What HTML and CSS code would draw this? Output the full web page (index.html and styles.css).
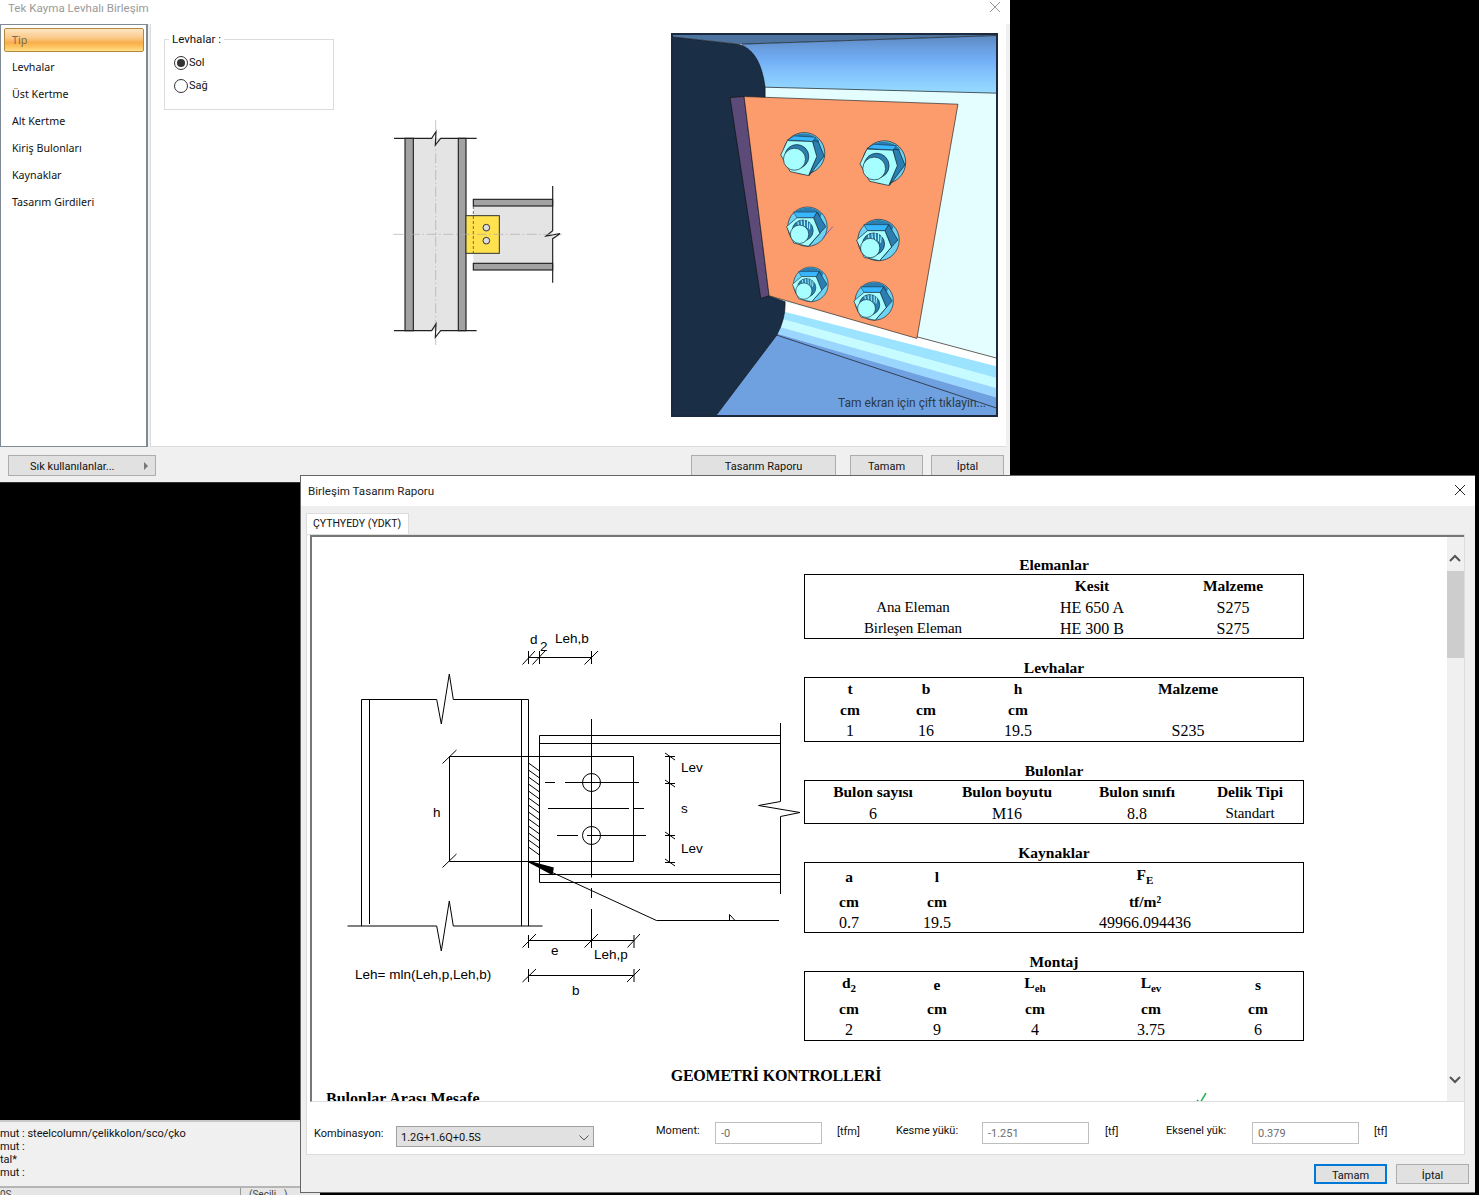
FILE: index.html
```html
<!DOCTYPE html>
<html lang="tr">
<head>
<meta charset="utf-8">
<title>Tek Kayma Levhalı Birleşim</title>
<link rel="stylesheet" href="styles.css">
</head>
<body>
<div class="desktop">

<section class="console">
  <div class="console-lines">
    <div>mut : steelcolumn/çelikkolon/sco/çko</div>
    <div>mut :</div>
    <div>tal*</div>
    <div>mut :</div>
  </div>
  <div class="console-status"><span class="status-a">0S</span><span class="status-b">(Seçili...)</span></div>
</section>

<section class="win win-one">
  <header class="w1-title">Tek Kayma Levhalı Birleşim
    <svg class="close-one" viewBox="0 0 12 12" width="12" height="12"><path d="M1 1L11 11M11 1L1 11"/></svg>
  </header>
  <div class="w1-body">
    <nav class="side">
      <div class="side-item side-active">Tip</div>
      <div class="side-item">Levhalar</div>
      <div class="side-item">Üst Kertme</div>
      <div class="side-item">Alt Kertme</div>
      <div class="side-item">Kiriş Bulonları</div>
      <div class="side-item">Kaynaklar</div>
      <div class="side-item">Tasarım Girdileri</div>
    </nav>
    <main class="w1-main">
      <fieldset class="group">
        <legend>Levhalar :</legend>
        <div class="radio-row"><span class="radio radio-on"></span>Sol</div>
        <div class="radio-row"><span class="radio"></span>Sağ</div>
      </fieldset>

      <svg class="mini" viewBox="0 0 570 675" width="190" height="225">
        <rect class="m-web" x="100" y="55" width="135" height="577"/>
        <rect class="m-fl" x="75" y="55" width="25" height="577"/>
        <rect class="m-fl" x="235" y="55" width="23" height="577"/>
        <path class="m-cl" d="M167 0V675"/>
        <path class="m-ln" d="M42 55H155L168 35L166 75L182 55H290M42 632H155L168 612L166 652L182 632H290"/>
        <rect class="m-web" x="280" y="258" width="238" height="172"/>
        <rect class="m-fl m-st" x="280" y="238" width="238" height="20"/>
        <rect class="m-fl m-st" x="280" y="430" width="238" height="20"/>
        <path class="m-ln" d="M518 198V332L498 348L540 341L518 356V488"/>
        <rect class="m-pl" x="258" y="287" width="100" height="113"/>
        <path class="m-cl" d="M40 343H545"/>
        <path class="m-da" d="M280 258V400"/>
        <circle class="m-ho" cx="319" cy="323" r="10"/>
        <circle class="m-ho" cx="319" cy="362" r="10"/>
      </svg>

      <div class="scene">
        <svg viewBox="24 31 968 1138" width="323" height="380">
          <defs>
            <linearGradient id="flange" gradientUnits="userSpaceOnUse" x1="0" y1="35" x2="0" y2="205">
              <stop class="g-a" offset="0"/>
              <stop class="g-b" offset="0.22"/>
              <stop class="g-c" offset="0.42"/>
              <stop class="g-d" offset="0.66"/>
              <stop class="g-e" offset="1"/>
            </linearGradient>
            <symbol id="bolt-a" viewBox="-80 -80 160 160" overflow="visible">
              <circle class="b-w" r="62"/>
              <path class="b-c" d="M-45 -42A62 62 0 0 1 45 -38L40 -25L-40 -30Z"/>
              <polygon class="b-s" points="25,-38 42,-36 60,8 15,67 36,10"/>
              <polygon class="b-t" points="-50,-40 -30,-52 35,-48 25,-35"/>
              <polygon class="b-f" points="-70,5 -50,-38 25,-35 38,10 13,67 -42,55"/>
              <circle class="b-s" cx="-22" cy="10" r="36"/>
              <circle class="b-f" cx="-29" cy="18" r="33"/>
            </symbol>
            <symbol id="bolt-b" viewBox="-80 -80 160 160" overflow="visible">
              <circle class="b-w" r="62"/>
              <path class="b-c" d="M-40 -46A62 62 0 0 1 45 -40L40 -28L-30 -30Z"/>
              <polygon class="b-s" points="30,-46 58,0 39,21 3,62 39,21 19,-28"/>
              <polygon class="b-t" points="-44,-46 30,-46 19,-28 -33,-28"/>
              <polygon class="b-f" points="-66,0 -33,-28 19,-28 39,21 3,62 -43,52"/>
              <circle class="b-s" cx="-15" cy="12" r="33"/>
              <path class="b-rib" d="M-30 -16L-28 2M-20 -20L-18 0M-10 -21L-9 0M0 -18L0 4M8 -12L6 8"/>
              <circle class="b-f" cx="-25" cy="24" r="29"/>
            </symbol>
          </defs>
          <rect class="c-bg" x="18" y="25" width="980" height="1150"/>
          <polygon class="c-1" points="18,25 998,25 998,32 230,58 18,36"/>
          <polygon class="c-flange" points="230,58 998,32 998,205 300,187"/>
          <path class="c-ln" d="M230 58L998 32M300 187L998 205"/>
          <polygon class="c-w" points="355,830 998,998 998,1025 355,862"/>
          <polygon class="c-6" points="358,860 998,1025 998,1060 350,882"/>
          <polygon class="c-7" points="350,882 998,1060 998,1090 342,905"/>
          <polygon class="c-8" points="342,905 998,1090 998,1118 335,925"/>
          <polygon class="c-9" points="335,925 998,1118 998,1175 150,1175"/>
          <path class="c-ln" d="M755 935L998 1000M335 930L998 1150"/>
          <path class="c-navy" d="M18 36L220 58Q285 75 300 187V240L310 812L360 830Q362 880 335 930L150 1175H18Z"/>
          <polygon class="c-pur" points="195,218 237,215 312,812 287,820"/>
          <polygon class="c-pl" points="237,215 878,238 755,940 312,812"/>
          <use href="#bolt-a" x="337" y="305" width="160" height="160"/>
          <use href="#bolt-a" x="574" y="329" width="166" height="166"/>
          <use href="#bolt-b" x="351" y="529" width="152" height="152"/>
          <use href="#bolt-b" x="560" y="565" width="160" height="160"/>
          <use href="#bolt-b" x="370" y="711" width="134" height="134"/>
          <use href="#bolt-b" x="553" y="754" width="148" height="148"/>
          <path class="c-blue" d="M472 640L503 605"/>
        </svg>
        <span class="scene-hint">Tam ekran için çift tıklayın...</span>
      </div>
    </main>
  </div>
  <footer class="w1-foot">
    <button class="btn btn-fav">Sık kullanılanlar...<span class="fav-arrow"></span></button>
    <div class="w1-actions">
      <button class="btn btn-report">Tasarım Raporu</button>
      <button class="btn btn-small">Tamam</button>
      <button class="btn btn-small">İptal</button>
    </div>
  </footer>
</section>

<section class="win win-two">
  <header class="w2-title">Birleşim Tasarım Raporu
    <svg class="close-two" viewBox="0 0 12 12" width="12" height="12"><path d="M1 1L11 11M11 1L1 11"/></svg>
  </header>
  <div class="tabs"><div class="tab">ÇYTHYEDY (YDKT)</div></div>
  <div class="panel">
    <div class="report-wrap">
      <div class="report">
        <div class="report-top">
          <svg class="cad" viewBox="340 620 470 390" width="470" height="390">
            <path d="M361.5 699.5H436.7L441.3 724L449.3 674L453.3 699.5H528.5M369.5 699.5V924M361.5 699.5V926M521.5 699.5V926M528.5 699.5V926M347.5 926H436.7L441.3 951L449.3 901L453.3 926H542.5"/>
            <path d="M539.5 735.5H780.5M539.5 743.5H780.5M539.5 874.5H780.5M539.5 882.5H780.5M539.5 735.5V882.5M780.5 723V801.5L758.5 805.5L800 812.5L780.5 816.5V894"/>
            <path d="M449.5 756.5H633.5V861.5H449.5ZM442.5 763.5L456.5 750M442.5 867.5L456.5 854"/>
            <path d="M528.5 763L539.5 771M528.5 770L539.5 778M528.5 777L539.5 785M528.5 784L539.5 792M528.5 791L539.5 799M528.5 798L539.5 806M528.5 805L539.5 813M528.5 812L539.5 820M528.5 819L539.5 827M528.5 826L539.5 834M528.5 833L539.5 841M528.5 840L539.5 848M528.5 847L539.5 855"/>
            <path d="M591.5 719V877.5M591.5 888V898M591.5 909V948M545 782.5H555M565 782.5H639M548 808.5H629M634 808.5H644M557 835.5H578M587 835.5H646"/>
            <circle cx="591.5" cy="782.5" r="9"/>
            <circle cx="591.5" cy="835.5" r="9"/>
            <path d="M669.5 757V862M665 756.5H675M665 783.5H675M665 835.5H675M665 862.5H675M665 753L675 760M665 780L675 787M665 832L675 839M665 859L675 866"/>
            <path d="M528.5 657.5H591.5M528.5 651V664M539.5 651V664M591.5 651V664M522.5 664.5L535 651M532.5 664.5L545 651M584.5 664.5L598 651"/>
            <path d="M528.5 940.5H634M528.5 935V948M634 935V948M522.5 947.5L536 934M584.5 947.5L598 934M627.5 947.5L640 934"/>
            <path d="M528.5 975.5H634M528.5 969V982M634 969V982M522.5 982L536 969M627 982L640 969"/>
            <path d="M528.5 861.5L656.5 920.5H779M729.5 920.5V914.5L735 920.5"/>
            <polygon class="cad-fill" points="528.5,861.5 553,868 552,874"/>
            <text x="530" y="644">d</text>
            <text x="540" y="651">2</text>
            <text x="555" y="643">Leh,b</text>
            <text x="681" y="772">Lev</text>
            <text x="681" y="813">s</text>
            <text x="681" y="853">Lev</text>
            <text x="433" y="817">h</text>
            <text x="551" y="955">e</text>
            <text x="594" y="959">Leh,p</text>
            <text x="572" y="995">b</text>
            <text x="355" y="979">Leh= mln(Leh,p,Leh,b)</text>
          </svg>
          <div class="tables">
            <h3 class="t-title">Elemanlar</h3>
            <div class="t t-ele">
              <span></span><b>Kesit</b><b>Malzeme</b>
              <span class="nm">Ana Eleman</span><span>HE 650 A</span><span>S275</span>
              <span class="nm">Birleşen Eleman</span><span>HE 300 B</span><span>S275</span>
            </div>
            <h3 class="t-title">Levhalar</h3>
            <div class="t t-lev">
              <b>t</b><b>b</b><b>h</b><b>Malzeme</b>
              <b>cm</b><b>cm</b><b>cm</b><span></span>
              <span>1</span><span>16</span><span>19.5</span><span>S235</span>
            </div>
            <h3 class="t-title">Bulonlar</h3>
            <div class="t t-bul">
              <b>Bulon sayısı</b><b>Bulon boyutu</b><b>Bulon sınıfı</b><b>Delik Tipi</b>
              <span>6</span><span>M16</span><span>8.8</span><span class="nm">Standart</span>
            </div>
            <h3 class="t-title">Kaynaklar</h3>
            <div class="t t-kay">
              <b class="hd">a</b><b class="hd">l</b><b>F<sub>E</sub></b>
              <b>cm</b><b>cm</b><b>tf/m²</b>
              <span>0.7</span><span>19.5</span><span>49966.094436</span>
            </div>
            <h3 class="t-title">Montaj</h3>
            <div class="t t-mon">
              <b>d<sub>2</sub></b><b class="hd">e</b><b>L<sub>eh</sub></b><b>L<sub>ev</sub></b><b class="hd">s</b>
              <b>cm</b><b>cm</b><b>cm</b><b>cm</b><b>cm</b>
              <span>2</span><span>9</span><span>4</span><span>3.75</span><span>6</span>
            </div>
          </div>
        </div>
        <h2 class="geo">GEOMETRİ KONTROLLERİ</h2>
        <div class="check-row">
          <h4>Bulonlar Arası Mesafe</h4>
          <svg class="tick" viewBox="0 0 12 10" width="12" height="10"><path d="M1 7L4 10L10 0"/></svg>
        </div>
      </div>
      <div class="scroll">
        <svg class="chev" viewBox="0 0 12 8" width="12" height="8"><path d="M1 7L6 2L11 7"/></svg>
        <div class="thumb"></div>
        <svg class="chev chev-down" viewBox="0 0 12 8" width="12" height="8"><path d="M1 1L6 6L11 1"/></svg>
      </div>
    </div>
    <div class="controls">
      <label class="c-label c-combo-label">Kombinasyon:</label>
      <div class="combo">1.2G+1.6Q+0.5S
        <svg viewBox="0 0 10 6" width="10" height="6"><path d="M0.5 0.5L5 5L9.5 0.5"/></svg>
      </div>
      <label class="c-label c-moment">Moment:</label>
      <input class="field" value="-0" readonly>
      <span class="unit u-tfm">[tfm]</span>
      <label class="c-label c-kesme">Kesme yükü:</label>
      <input class="field" value="-1.251" readonly>
      <span class="unit u-tf">[tf]</span>
      <label class="c-label c-eks">Eksenel yük:</label>
      <input class="field" value="0.379" readonly>
      <span class="unit u-tf2">[tf]</span>
    </div>
  </div>
  <footer class="w2-foot">
    <button class="btn btn-foot btn-default">Tamam</button>
    <button class="btn btn-foot">İptal</button>
  </footer>
</section>

</div>
</body>
</html>
```
FILE: styles.css
```css
* { box-sizing: border-box; }
html, body { margin: 0; padding: 0; background: #000; }
body { font-family: Roboto, "Noto Sans", sans-serif; font-size: 11px; color: #111; }
.desktop { position: relative; width: 1479px; height: 1195px; overflow: hidden; background: #000; }
.win { position: absolute; display: flex; flex-direction: column; background: #f0f0f0; }

/* console behind the windows */
.console { position: absolute; left: 0; top: 1120px; width: 320px; height: 75px; background: #f0f0f0; border-top: 2px solid #c8c8c8; display: flex; flex-direction: column; }
.console-lines { flex: 1; padding-top: 5px; line-height: 13px; font-size: 11px; }
.console-status { height: 9px; border-top: 2px solid #b5b5b5; background: #e6e6e6; display: flex; line-height: 14px; font-size: 10px; overflow: hidden; color: #444; }
.status-a { width: 241px; border-right: 1px solid #999; }
.status-b { padding-left: 8px; }

/* first window */
.win-one { left: 0; top: 0; width: 1010px; height: 483px; border-bottom: 1px solid #333; }
.w1-title { position: relative; height: 24px; background: #fff; padding: 1px 0 0 8px; font-size: 11.6px; line-height: 15px; color: #9a9a9a; }
.close-one { position: absolute; right: 9px; top: 1px; fill: none; stroke: #999; stroke-width: 1; }
.w1-body { flex: 1; display: flex; padding-right: 4px; min-height: 0; }
.side { width: 148px; height: 423px; background: #fff; border: 1px solid #7f8a94; border-right-width: 2px; padding: 3px 2px 0 3px; font-family: "Noto Sans", sans-serif; }
.side-item { height: 27px; line-height: 24px; padding-left: 8px; font-size: 10.7px; color: #111; }
.side-active { height: 24px; margin-bottom: 3px; color: #7a6a50; border: 1px solid #b3893f; border-radius: 2px; background: linear-gradient(#fde6c2 0%, #fbc98a 40%, #f9ae4b 62%, #fcc35e 80%, #ffe08a 100%); line-height: 23px; padding-left: 7px; }
.w1-main { flex: 1; margin-left: 2px; height: 423px; background: #fff; border-left: 1px solid #dcdcdc; border-bottom: 1px solid #dcdcdc; display: flex; align-items: flex-start; padding-left: 13px; }
.group { width: 170px; height: 78px; margin: 8px 0 0; padding: 5px 0 0 9px; border: 1px solid #dcdcdc; min-width: 0; }
.group legend { padding: 1px 3px 0; margin-left: -5px; font-size: 11.5px; line-height: 13px; }
.radio-row { display: flex; align-items: center; height: 23px; gap: 1px; }
.radio { width: 14px; height: 14px; border-radius: 50%; border: 1px solid #333; background: #fff; display: flex; align-items: center; justify-content: center; }
.radio-on::after { content: ""; width: 8px; height: 8px; border-radius: 50%; background: #333; }

.mini { margin: 96px 0 0 46px; flex: none; }
.m-web { fill: #e4e4e4; }
.m-fl { fill: #a2a2a2; stroke: #222; stroke-width: 3.5; }
.m-st { stroke-width: 3.5; }
.m-ln { fill: none; stroke: #222; stroke-width: 3.5; }
.m-cl { fill: none; stroke: #aaa; stroke-width: 2; stroke-dasharray: 30 8 4 8; }
.m-pl { fill: #ffe24d; stroke: #333; stroke-width: 3; }
.m-da { fill: none; stroke: #333; stroke-width: 2; stroke-dasharray: 9 6; }
.m-ho { fill: #ddd; stroke: #333; stroke-width: 3; }

.scene { position: relative; flex: none; width: 327px; height: 384px; margin: 9px 0 0 101px; border: 2px solid #1c2a40; }
.scene svg { display: block; }
.scene-hint { position: absolute; left: 165px; top: 361px; font-size: 12px; line-height: 15px; color: #2b3a44; white-space: nowrap; }
.c-bg { fill: #e4fdff; }
.c-1 { fill: #4d739f; }
.c-flange { fill: url(#flange); }
.g-a { stop-color: #5d8ac2; }
.g-b { stop-color: #6a9fe2; }
.g-c { stop-color: #72aef5; }
.g-d { stop-color: #84c4fd; }
.g-e { stop-color: #97dbff; }
.c-w { fill: #fff; }
.c-6 { fill: #9be3ff; }
.c-7 { fill: #c6fbff; }
.c-8 { fill: #9bd6ff; }
.c-9 { fill: #6fa0e0; }
.c-ln { fill: none; stroke: #111; stroke-width: 2; }
.c-navy { fill: #1a2e46; stroke: #111; stroke-width: 2; }
.c-pur { fill: #5c4a78; stroke: #111; stroke-width: 2; }
.c-pl { fill: #fc9b6c; stroke: #222; stroke-width: 2; }
.c-blue { fill: none; stroke: #3a46e8; stroke-width: 2; }
.b-w { fill: #6cd4f2; stroke: #102030; stroke-width: 2; }
.b-c { fill: #2a7fb0; }
.b-s { fill: #2a7fb0; stroke: #102030; stroke-width: 2; }
.b-t { fill: #38b6ff; stroke: #102030; stroke-width: 1.5; }
.b-f { fill: #a6feff; stroke: #102030; stroke-width: 2; }
.b-rib { fill: none; stroke: #a6feff; stroke-width: 3; }

.w1-foot { height: 35px; display: flex; justify-content: space-between; padding: 8px 6px 0 8px; }
.w1-actions { display: flex; gap: 8px; }
.btn { height: 21px; padding: 1px 0 0; border: 1px solid #adadad; background: #e1e1e1; font: 11px/19px Roboto, "Noto Sans", sans-serif; color: #111; }
.btn-fav { position: relative; width: 148px; text-align: left; padding-left: 21px; }
.fav-arrow { position: absolute; right: 7px; top: 6px; border-left: 4px solid #777; border-top: 4px solid transparent; border-bottom: 4px solid transparent; }
.btn-report { width: 145px; margin-right: 6px; }
.btn-small { width: 73px; }

/* second window */
.win-two { left: 300px; top: 475px; width: 1175px; height: 718px; border: 1px solid #666; border-width: 1px 0 1px 1px; background: #efefef; }
.w2-title { position: relative; height: 30px; background: #fff; padding-left: 7px; font-size: 11.6px; line-height: 30px; color: #222; }
.close-two { position: absolute; right: 9px; top: 8px; fill: none; stroke: #222; stroke-width: 1; }
.tabs { height: 28px; padding: 7px 0 0 5px; }
.tab { width: 103px; height: 21px; background: #fff; border: 1px solid #dcdcdc; border-bottom: 0; padding-left: 6px; line-height: 19px; font-size: 10.5px; }
.panel { width: 1159px; height: 621px; margin-left: 5px; background: #fff; border: 1px solid #dcdcdc; padding: 0; display: flex; flex-direction: column; }
.report-wrap { height: 567px; margin: 0 0 0 3px; border-top: 2px solid #777; border-left: 2px solid #777; border-bottom: 1px solid #ddd; display: flex; overflow: hidden; }
.report { width: 1135px; flex: none; overflow: hidden; }
.report-top { display: flex; align-items: flex-start; height: 529px; }
.cad { margin: 83px 0 0 28px; flex: none; }
.cad path, .cad circle { fill: none; stroke: #000; stroke-width: 1; }
.cad .cad-fill { fill: #000; stroke: #000; stroke-width: 1.5; }
.cad text { font-family: "Liberation Sans", sans-serif; font-size: 13.5px; fill: #000; }
.tables { width: 500px; margin: 17px 0 0 -6px; font: 16px/21px "Liberation Serif", serif; color: #000; }
.t-title { margin: 18px 0 0; height: 20px; font: bold 15.5px/22px "Liberation Serif", serif; text-align: center; }
.t-title:first-child { margin-top: 0; }
.t { display: grid; border: 1px solid #000; grid-auto-rows: 21px; text-align: center; white-space: nowrap; }
.t b { font-weight: bold; font-size: 15.5px; }
.t sub { font-size: 11px; line-height: 0; }
.t .nm { font-size: 15px; letter-spacing: -0.1px; }
.t-ele { grid-template-columns: 216px 142px 140px; height: 65px; padding-top: 1px; }
.t-ele b, .t-bul b { line-height: 19px; }
.t-lev { grid-template-columns: 90px 62px 122px 218px; height: 65px; }
.t-bul { grid-template-columns: 136px 132px 128px 98px; height: 44px; padding-top: 1px; }
.t-kay { grid-template-columns: 88px 88px 328px; height: 71px; grid-template-rows: 27px 21px 20px; padding-top: 1px; }
.t-mon { grid-template-columns: 88px 88px 108px 124px 90px; height: 70px; grid-template-rows: 26px 21px 21px; }
.t .hd { padding-top: 2px; }
.geo { margin: 0; width: 928px; height: 20px; font: bold 16px/20px "Liberation Serif", serif; letter-spacing: -0.2px; text-align: center; color: #000; }
.check-row { display: flex; align-items: flex-start; margin-top: 3px; padding-left: 14px; }
.check-row h4 { margin: 0; width: 870px; font: bold 16px/20px "Liberation Serif", serif; color: #000; }
.tick { fill: none; stroke: #22b14c; stroke-width: 1.5; margin-top: 4px; }
.scroll { width: 17px; flex: none; background: #f0f0f0; display: flex; flex-direction: column; align-items: center; position: relative; }
.chev { fill: none; stroke: #555; stroke-width: 2; margin: 17px 2px 0 0; flex: none; }
.thumb { width: 17px; height: 87px; background: #cdcdcd; margin-top: 9px; flex: none; }
.chev-down { margin-top: 418px; }
.controls { flex: 1; display: flex; align-items: flex-start; padding-top: 20px; position: relative; }
.c-label { font-size: 11px; line-height: 14px; white-space: nowrap; }
.c-combo-label { margin: 5px 15px 0 7px; width: 67px; }
.combo { width: 198px; height: 21px; margin-top: 4px; background: #e1e1e1; border: 1px solid #a0a0a0; padding: 2px 4px 0; line-height: 19px; display: flex; justify-content: space-between; align-items: center; }
.combo svg { fill: none; stroke: #555; stroke-width: 1; }
.c-moment { width: 59px; margin: 2px 0 0 62px; }
.field { width: 107px; height: 22px; border: 1px solid #bfbfbf; background: #fff; padding: 0 5px; font: 11px Roboto, "Noto Sans", sans-serif; color: #6d6d6d; margin-top: 0; outline: 0; }
.unit { font-size: 11px; line-height: 14px; margin-top: 3px; white-space: nowrap; }
.u-tfm { width: 59px; margin-left: 15px; }
.c-kesme { width: 86px; margin-top: 2px; }
.u-tf { width: 61px; margin-left: 16px; }
.c-eks { width: 86px; margin-top: 2px; }
.u-tf2 { margin-left: 15px; }
.w2-foot { flex: 1; display: flex; justify-content: flex-end; align-items: flex-start; gap: 9px; padding: 9px 6px 0 0; }
.btn-foot { width: 73px; height: 20px; line-height: 18px; padding-top: 2px; }
.btn-default { border: 2px solid #0078d7; line-height: 16px; }
```
